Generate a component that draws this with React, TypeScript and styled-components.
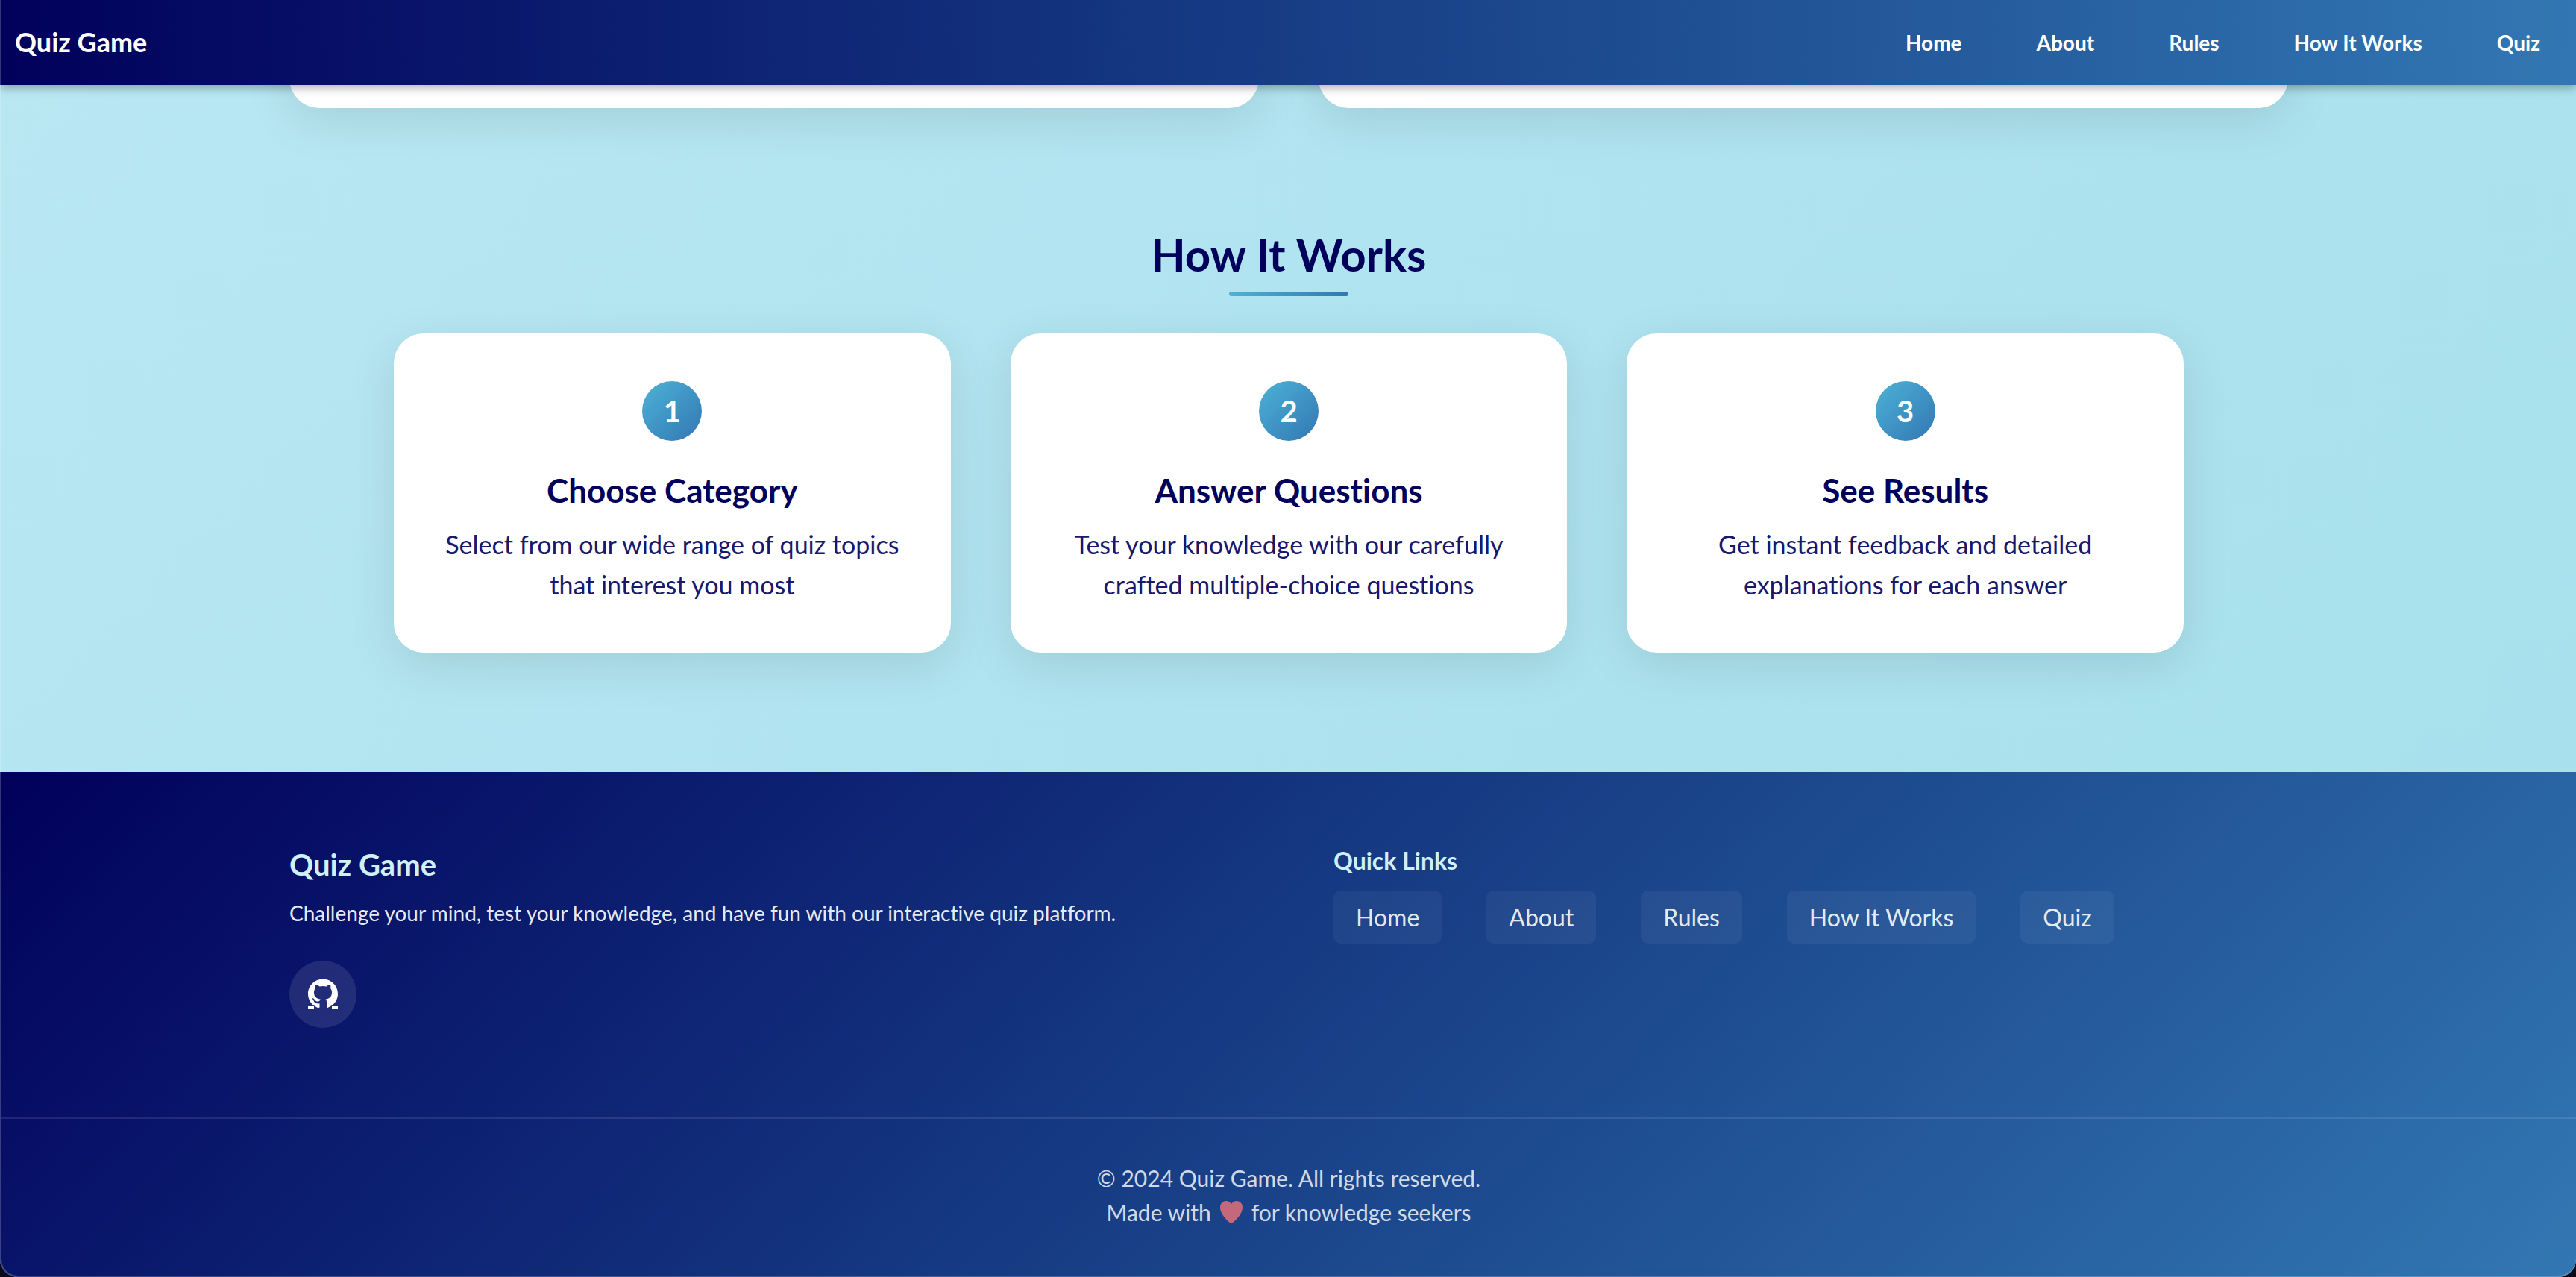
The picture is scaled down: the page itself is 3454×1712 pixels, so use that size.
import React from "react";
import styled, { createGlobalStyle } from "styled-components";

const color = {
  navy: "#01005b",
  royal: "#173d85",
  blue: "#3277b3",
  sky: "#4db2d6",
  ice: "#d0f0f8",
};

const cardShadow = "0 16px 64px rgba(0, 0, 0, 0.1)";

const GlobalStyle = createGlobalStyle`
  * { box-sizing: border-box; margin: 0; padding: 0; }
  body {
    background: #0b0a16;
    font-family: Lato, "Open Sans", sans-serif;
    font-variant-ligatures: none;
    line-height: 1.6;
    overflow: hidden;
  }
`;

const Window = styled.div`
  position: relative;
  min-height: 100vh;
  display: flex;
  flex-direction: column;
  overflow: hidden;
  border-radius: 0 0 24px 24px;
  background: linear-gradient(135deg, #b9e8f3 0%, #aee3ef 50%, #a6e0ec 100%);

  &::after {
    content: "";
    position: absolute;
    inset: 0;
    z-index: 2;
    border: solid rgba(255, 255, 255, 0.2);
    border-width: 0 0 2px 2px;
    border-radius: inherit;
    pointer-events: none;
  }
`;

const Header = styled.header`
  position: relative;
  z-index: 1;
  display: flex;
  align-items: center;
  justify-content: space-between;
  height: 114px;
  padding: 0 48px 0 20px;
  background: linear-gradient(90deg, ${color.navy}, ${color.royal} 50%, ${color.blue});
  box-shadow: 0 4px 12px rgba(0, 0, 0, 0.3);
`;

const Logo = styled.a`
  color: #fff;
  font-size: 36px;
  font-weight: 700;
  text-decoration: none;
`;

const Nav = styled.nav`
  display: flex;
  gap: 100px;
`;

const NavLink = styled.a`
  color: #fff;
  font-size: 28px;
  font-weight: 700;
  text-decoration: none;
`;

const Main = styled.main`
  padding-left: 2px;
`;

const Container = styled.div`
  width: 100%;
  max-width: 2680px;
  margin: 0 auto;
`;

const PanelRow = styled(Container)`
  display: grid;
  grid-template-columns: 1fr 1fr;
  gap: 80px;
`;

const Panel = styled.div`
  height: 160px;
  margin-top: -129px;
  border-radius: 40px;
  background: #fff;
  box-shadow: ${cardShadow};
`;

const Section = styled.section`
  padding: 146px 0 160px;
`;

const SectionTitle = styled.h2`
  display: flex;
  flex-direction: column;
  align-items: center;
  color: ${color.navy};
  font-size: 60px;
  line-height: 100px;

  &::after {
    content: "";
    width: 160px;
    height: 6px;
    border-radius: 4px;
    background: linear-gradient(90deg, ${color.sky}, ${color.blue});
  }
`;

const Steps = styled.ol`
  display: grid;
  grid-template-columns: repeat(3, 1fr);
  gap: 80px;
  max-width: 2400px;
  margin: 50px auto 0;
  list-style: none;
`;

const StepCard = styled.li`
  display: flex;
  flex-direction: column;
  align-items: center;
  padding: 64px;
  border-radius: 40px;
  background: #fff;
  color: ${color.navy};
  text-align: center;
  box-shadow: ${cardShadow};
`;

const StepNumber = styled.span`
  display: grid;
  place-items: center;
  width: 80px;
  height: 80px;
  border-radius: 50%;
  background: linear-gradient(135deg, ${color.sky}, ${color.blue});
  color: #fff;
  font-size: 40px;
  font-weight: 700;
`;

const StepTitle = styled.h3`
  margin: 32px 0 12px;
  font-size: 44px;
  line-height: 68px;
`;

const StepText = styled.p`
  max-width: 620px;
  font-size: 34px;
  line-height: 54px;
  opacity: 0.9;
`;

const Footer = styled.footer`
  flex: 1;
  padding: 93px 0 0 2px;
  background: linear-gradient(135deg, ${color.navy}, ${color.royal} 50%, ${color.blue});
`;

const FooterGrid = styled(Container)`
  display: grid;
  grid-template-columns: 1fr 1fr;
  gap: 120px;
  padding-bottom: 120px;
`;

const Brand = styled.h3`
  color: ${color.ice};
  font-size: 40px;
  line-height: 62px;
`;

const Tagline = styled.p`
  margin: 12px 0 41px;
  color: #fff;
  font-size: 28px;
  line-height: 45px;
  opacity: 0.9;
`;

const SocialLink = styled.a`
  display: grid;
  place-items: center;
  width: 90px;
  height: 90px;
  border-radius: 50%;
  background: rgba(255, 255, 255, 0.1);
  color: #fff;
`;

const LinksTitle = styled.h4`
  color: ${color.ice};
  font-size: 32px;
  line-height: 52px;
`;

const LinkList = styled.ul`
  display: flex;
  flex-wrap: wrap;
  gap: 60px;
  margin-top: 14px;
  list-style: none;
`;

const FooterLink = styled.a`
  display: block;
  padding: 10px 30px;
  border-radius: 10px;
  background: rgba(255, 255, 255, 0.05);
  color: rgba(255, 255, 255, 0.9);
  font-size: 32px;
  line-height: 51px;
  text-decoration: none;
`;

const Legal = styled.div`
  display: flex;
  flex-direction: column;
  align-items: center;
  padding: 56px 0 48px;
  border-top: 2px solid rgba(255, 255, 255, 0.1);
`;

const LegalLine = styled.p`
  display: flex;
  align-items: center;
  gap: 12px;
  color: #fff;
  font-size: 30px;
  line-height: 46px;
  opacity: 0.8;
`;

const links = ["Home", "About", "Rules", "How It Works", "Quiz"];

const steps = [
  { title: "Choose Category", text: "Select from our wide range of quiz topics that interest you most" },
  { title: "Answer Questions", text: "Test your knowledge with our carefully crafted multiple-choice questions" },
  { title: "See Results", text: "Get instant feedback and detailed explanations for each answer" },
];

const anchor = (name: string) => "#" + name.toLowerCase().replace(/ /g, "-");

const GithubIcon = () => (
  <svg width="40" height="42" viewBox="0 0 40 42" fill="currentColor" aria-hidden="true">
    <path d="M20 0.500C9 0.500 0 9.500 0 20.500c0 8 5 15 12.500 18.200 1 .4 3 .3 3-.5v-5c-5 .9-7-1.200-8-3.700-.5-1.200-1.300-2.200-2.200-2.900-.5-.5 2.200-.8 3.600 1.400 1.500 2.600 3.600 3.100 6.500 2.100.2-1.200.6-2 1.300-2.600-5-.6-8.700-2.900-8.700-9 0-2.400.6-4 1.900-5.600-.5-1.800-.4-3.600.2-4.600 2-.1 3.700.9 5.200 2.200 3-.8 6.400-.8 9.400 0 1.500-1.300 3.200-2.300 5.200-2.200.6 1 .7 2.800.2 4.600 1.300 1.600 1.900 3.200 1.900 5.600 0 6.100-3.700 8.400-8.300 9 .8.800 1.300 2 1.300 3.700v7c0 .8.800.9 1.800.5C35 35.500 40 28.500 40 20.500 40 9.500 31 .5 20 .5z" />
    <path d="M0 37h8v4H0zM32 37h8v4h-8z" />
  </svg>
);

const HeartIcon = () => (
  <svg width="30" height="30" viewBox="0 0 30 30" fill="#ef7378" role="img" aria-label="love">
    <path d="M15 30C13.500 30 0 19 0 8.700 0 3.700 3.300 0 7.800 0 11 0 13.700 1.600 15 4.300 16.300 1.600 19 0 22.200 0 26.700 0 30 3.700 30 8.700 30 19 16.500 30 15 30z" />
  </svg>
);

export default function App() {
  return (
    <>
      <GlobalStyle />
      <Window>
        <Header>
          <Logo href="#home">Quiz Game</Logo>
          <Nav>
            {links.map((name) => (
              <NavLink key={name} href={anchor(name)}>{name}</NavLink>
            ))}
          </Nav>
        </Header>
        <Main>
          <PanelRow>
            <Panel />
            <Panel />
          </PanelRow>
          <Section id="how-it-works">
            <SectionTitle>How It Works</SectionTitle>
            <Steps>
              {steps.map((step, index) => (
                <StepCard key={step.title}>
                  <StepNumber>{index + 1}</StepNumber>
                  <StepTitle>{step.title}</StepTitle>
                  <StepText>{step.text}</StepText>
                </StepCard>
              ))}
            </Steps>
          </Section>
        </Main>
        <Footer>
          <FooterGrid>
            <div>
              <Brand>Quiz Game</Brand>
              <Tagline>
                Challenge your mind, test your knowledge, and have fun with our interactive quiz platform.
              </Tagline>
              <SocialLink href="#github" aria-label="GitHub">
                <GithubIcon />
              </SocialLink>
            </div>
            <nav>
              <LinksTitle>Quick Links</LinksTitle>
              <LinkList>
                {links.map((name) => (
                  <li key={name}>
                    <FooterLink href={anchor(name)}>{name}</FooterLink>
                  </li>
                ))}
              </LinkList>
            </nav>
          </FooterGrid>
          <Legal>
            <LegalLine>© 2024 Quiz Game. All rights reserved.</LegalLine>
            <LegalLine>
              Made with <HeartIcon /> for knowledge seekers
            </LegalLine>
          </Legal>
        </Footer>
      </Window>
    </>
  );
}
